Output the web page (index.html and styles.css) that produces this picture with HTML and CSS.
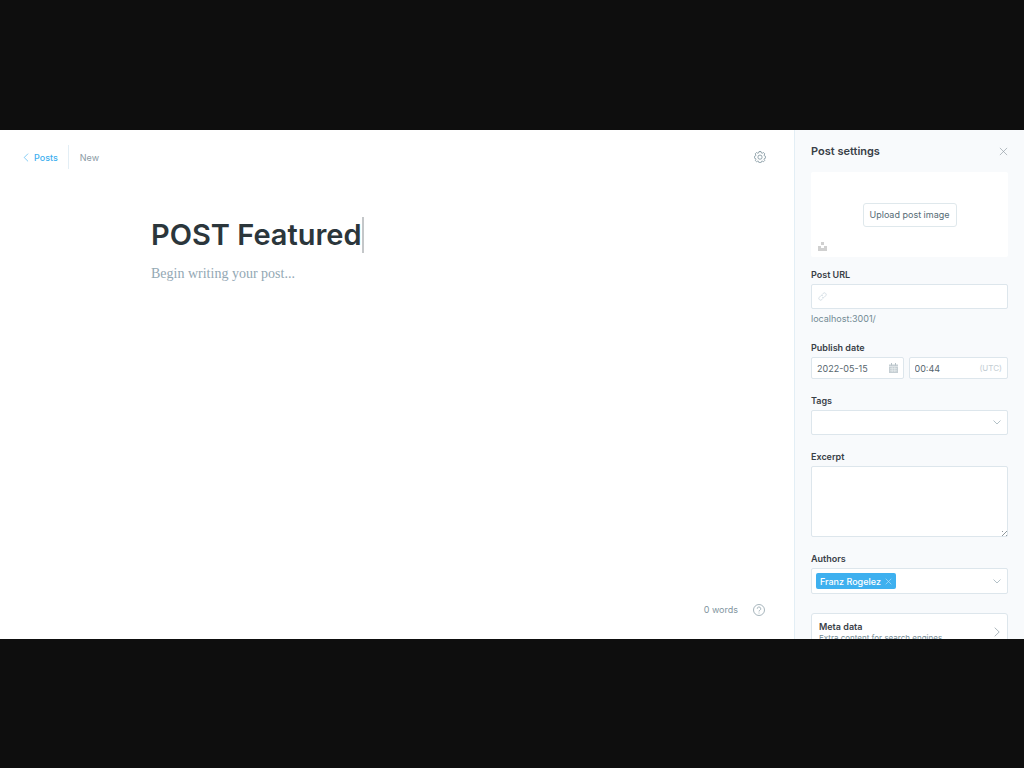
FILE: index.html
```html
<!DOCTYPE html>
<html lang="en">
<head>
<meta charset="utf-8">
<meta name="viewport" content="width=device-width, initial-scale=1">
<title>Post editor</title>
<link rel="stylesheet" href="styles.css">
</head>
<body>
<div class="app">
  <main class="editor">
    <header class="topbar">
      <a class="back" href="#posts">
        <svg class="back-icon" viewBox="0 0 6 10" aria-hidden="true"><path d="M5.300.7 1 5l4.300 4.300"/></svg>
        <span>Posts</span>
      </a>
      <span class="status">New</span>
      <button class="icon-button settings" type="button" aria-label="Settings">
        <svg viewBox="0 0 24 24" aria-hidden="true"><path d="M10 1h4l.8 3 1.500.6L19 3l2.500 2.700-1.300 2.600.7 1.600L23.500 11v3l-2.700.9-.7 1.600L21.400 19 19 21.400l-2.700-1.300-1.500.6L14 23.500h-4l-.8-2.800-1.500-.6L5 21.400 2.600 19l1.300-2.500-.7-1.600L.500 14v-3l2.600-1.100.7-1.600L2.500 5.700 5 3l2.700 1.600L9.200 4z"/><circle cx="12" cy="12.300" r="4.200"/></svg>
      </button>
    </header>
    <section class="canvas">
      <div class="title-row">
        <h1 class="title" contenteditable="true">POST Featured</h1>
        <span class="caret"></span>
      </div>
      <p class="body-placeholder">Begin writing your post...</p>
    </section>
    <footer class="footer">
      <span>0 words</span>
      <button class="icon-button help" type="button" aria-label="Help">
        <svg viewBox="0 0 24 24" aria-hidden="true"><circle cx="12" cy="12" r="11"/><path d="M8.500 9.500a3.500 3.500 0 1 1 5.200 3c-1.200.7-1.700 1.200-1.700 2.500M12 17.200v1.800"/></svg>
      </button>
    </footer>
  </main>

  <aside class="sidebar">
    <header class="sidebar-header">
      <h2 class="sidebar-title">Post settings</h2>
      <button class="icon-button close" type="button" aria-label="Close">
        <svg viewBox="0 0 10 10" aria-hidden="true"><path d="m1 1 8 8M9 1 1 9"/></svg>
      </button>
    </header>
    <form class="fields">
      <div class="uploader">
        <button class="upload-button" type="button">Upload post image</button>
        <button class="icon-button unsplash" type="button" aria-label="Unsplash">
          <svg viewBox="0 0 9 9" aria-hidden="true"><path d="M3 0h3v3H3zM0 4h3v2h3V4h3v5H0z"/></svg>
        </button>
      </div>

      <div class="field">
        <label for="url">Post URL</label>
        <div class="control">
          <svg class="link-icon" viewBox="0 0 24 24" aria-hidden="true"><path d="m11 7 3-3.500a4 4 0 0 1 5.600-.3l1.200 1.200a4 4 0 0 1-.3 5.600L16.500 14a4 4 0 0 1-5.500 0M13 17l-3 3.500a4 4 0 0 1-5.600.3l-1.200-1.200a4 4 0 0 1 .3-5.600L7.500 10a4 4 0 0 1 5.500 0"/></svg>
          <input id="url" type="text">
        </div>
        <p class="hint">localhost:3001/</p>
      </div>

      <div class="field">
        <label for="date">Publish date</label>
        <div class="date-row">
          <div class="control short">
            <input id="date" type="text" value="2022-05-15">
            <svg class="calendar-icon" viewBox="0 0 9 10" aria-hidden="true"><path class="frame" d="M0 1.500h9V10H0z"/><path class="rings" d="M2.500 0v2.500M6.500 0v2.500"/><path class="cells" d="M0 3.500h9M1 5.700h7M1 7.800h7M3.200 4v5M5.800 4v5"/></svg>
          </div>
          <div class="control short">
            <input type="text" value="00:44" aria-label="Publish time">
            <span class="zone">(UTC)</span>
          </div>
        </div>
      </div>

      <div class="field">
        <label for="tags">Tags</label>
        <div class="control">
          <select id="tags"><option></option></select>
          <svg class="chevron" viewBox="0 0 8 5" aria-hidden="true"><path d="m.500.500 3.500 3.500L7.500.500"/></svg>
        </div>
      </div>

      <div class="field">
        <label for="excerpt">Excerpt</label>
        <textarea id="excerpt"></textarea>
      </div>

      <div class="field">
        <label for="authors">Authors</label>
        <div class="control tall">
          <span class="chip">Franz Rogelez
            <button class="icon-button chip-remove" type="button" aria-label="Remove Franz Rogelez"><svg viewBox="0 0 10 10" aria-hidden="true"><path d="m1 1 8 8M9 1 1 9"/></svg></button>
          </span>
          <input id="authors" type="text" role="combobox" aria-expanded="false">
          <svg class="chevron" viewBox="0 0 8 5" aria-hidden="true"><path d="m.500.500 3.500 3.500L7.500.500"/></svg>
        </div>
      </div>

      <button class="meta" type="button">
        <span class="meta-text">
          <span class="meta-title">Meta data</span>
          <span class="meta-note">Extra content for search engines</span>
        </span>
        <svg class="meta-arrow" viewBox="0 0 6 10" aria-hidden="true"><path d="m.700.700 4.500 4.300-4.500 4.300"/></svg>
      </button>
    </form>
  </aside>
</div>
</body>
</html>
```

FILE: styles.css
```css
* {
  box-sizing: border-box;
}

body {
  margin: 0;
  height: 100vh;
  padding: 130px 0 129px;
  background: #0e0e0e;
  font: 9px/13px Inter, "Liberation Sans", sans-serif;
  color: #394047;
}

h1, h2, p {
  margin: 0;
}

button, input, select, textarea {
  font: inherit;
  color: inherit;
}

svg {
  display: block;
  fill: none;
  stroke: currentColor;
}

.app {
  display: grid;
  grid-template-columns: 1fr 230px;
  height: 100%;
  overflow: hidden;
  background: #fff;
}

.editor {
  display: flex;
  flex-direction: column;
  min-height: 0;
}

.icon-button {
  display: block;
  padding: 0;
  border: 0;
  background: none;
}

.topbar {
  display: flex;
  align-items: center;
  padding: 15px 28px 0 23px;
  color: #8b9ba5;
}

.back {
  display: flex;
  align-items: center;
  gap: 5px;
  height: 24px;
  padding-right: 10px;
  border-right: 1px solid #e3eef5;
  color: #3eb0ef;
  font-weight: 500;
  text-decoration: none;
}

.back-icon {
  width: 6px;
  height: 9px;
  stroke-width: 0.7;
}

.status {
  padding-left: 11px;
}

.settings {
  margin-left: auto;
  color: #738a94;
}

.settings svg {
  width: 12px;
  height: 12px;
  stroke-width: 1.5;
}

.canvas {
  flex: 1;
  width: 100%;
  max-width: 492px;
  margin: 0 auto;
  padding-top: 48px;
}

.title-row {
  display: flex;
}

.title {
  font-size: 29px;
  line-height: 36px;
  font-weight: 600;
  color: #2b363b;
}

.caret {
  width: 2px;
  background: #c4c7c9;
}

.body-placeholder {
  padding-top: 12px;
  font: 14px/18px "Liberation Serif", serif;
  color: #93a8b4;
}

.footer {
  display: flex;
  align-items: center;
  justify-content: flex-end;
  gap: 15px;
  padding: 0 29px 23px;
  color: #8296a0;
}

.help svg {
  width: 12px;
  height: 12px;
  stroke-width: 1.4;
}

.sidebar {
  min-height: 0;
  overflow: hidden;
  padding: 12px 16px 0;
  border-left: 1px solid #e3eef5;
  background: #f8fafc;
}

.sidebar-header {
  display: flex;
  align-items: center;
  justify-content: space-between;
  height: 18px;
}

.sidebar-title {
  font-size: 11px;
  line-height: 18px;
  font-weight: 600;
}

.close {
  color: #8c989f;
}

.close svg {
  width: 9px;
  height: 9px;
  stroke-width: 0.7;
}

.fields {
  display: flex;
  flex-direction: column;
  gap: 15px;
  padding-top: 12px;
}

.uploader {
  position: relative;
  display: flex;
  align-items: center;
  justify-content: center;
  height: 85px;
  margin-bottom: -4px;
  border-radius: 2px;
  background: #fff;
}

.upload-button {
  height: 24px;
  padding: 0 6px;
  border: 1px solid #dfe8ec;
  border-radius: 3px;
  background: #fff;
  color: #546b75;
}

.unsplash {
  position: absolute;
  left: 7px;
  bottom: 6px;
}

.unsplash svg {
  width: 9px;
  height: 9px;
  fill: #d0d0d0;
  stroke: none;
}

.field {
  display: flex;
  flex-direction: column;
  gap: 3px;
}

.field label {
  font-weight: 600;
}

.control {
  display: flex;
  align-items: center;
  position: relative;
  height: 25px;
  padding: 0 6px;
  border: 1px solid #dde6ec;
  border-radius: 2px;
  background: #fff;
}

.control.short {
  height: 22px;
  padding: 0 5px;
}

.control.tall {
  height: 26px;
  padding: 0 4px;
}

.control input,
.control select {
  flex: 1;
  width: 0;
  min-width: 0;
  padding: 0;
  border: 0;
  outline: 0;
  background: none;
  appearance: none;
  color: #56656d;
}

.link-icon {
  width: 9px;
  height: 9px;
  stroke: #c9d6dd;
  stroke-width: 2;
}

.hint {
  line-height: 14px;
  color: #738a94;
}

.date-row {
  display: grid;
  grid-template-columns: 93fr 100fr;
  gap: 5px;
}

.calendar-icon {
  width: 9px;
  height: 10px;
}

.frame {
  fill: #c5ced3;
  stroke: none;
}

.rings {
  stroke: #b7c2c8;
}

.cells {
  stroke: #eef2f4;
  stroke-width: 0.6;
}

.zone {
  font-size: 8px;
  color: #c3cdd3;
}

.chevron {
  position: absolute;
  right: 6px;
  width: 8px;
  height: 5px;
  color: #9fb1b9;
  stroke-width: 0.8;
  pointer-events: none;
}

textarea {
  display: block;
  width: 100%;
  height: 71px;
  padding: 5px;
  border: 1px solid #dde6ec;
  border-radius: 2px;
  outline: 0;
  background: #fff;
  resize: vertical;
}

textarea::-webkit-resizer {
  background: repeating-linear-gradient(135deg, #8f989d 0 1px, #fff 1px 3px) right bottom / 5px 5px no-repeat;
  clip-path: polygon(100% 0, 100% 100%, 0 100%);
}

.chip {
  display: flex;
  align-items: center;
  gap: 4px;
  height: 16px;
  padding: 0 4px;
  border-radius: 2px;
  background: #3eb0ef;
  color: #fff;
  font-weight: 500;
  white-space: nowrap;
}

.chip-remove svg {
  width: 7px;
  height: 7px;
  stroke: #b4dff8;
}

.meta {
  display: flex;
  align-items: center;
  justify-content: space-between;
  margin-top: 4px;
  padding: 7px 7px 5px;
  border: 1px solid #dde6ec;
  border-radius: 3px;
  background: #fff;
  text-align: left;
}

.meta-text {
  display: flex;
  flex-direction: column;
}

.meta-title {
  font-weight: 600;
  line-height: 12px;
}

.meta-note {
  font-size: 8px;
  line-height: 10px;
  color: #738a94;
}

.meta-arrow {
  width: 6px;
  height: 10px;
  color: #8c9ba3;
  stroke-width: 0.7;
}
```
